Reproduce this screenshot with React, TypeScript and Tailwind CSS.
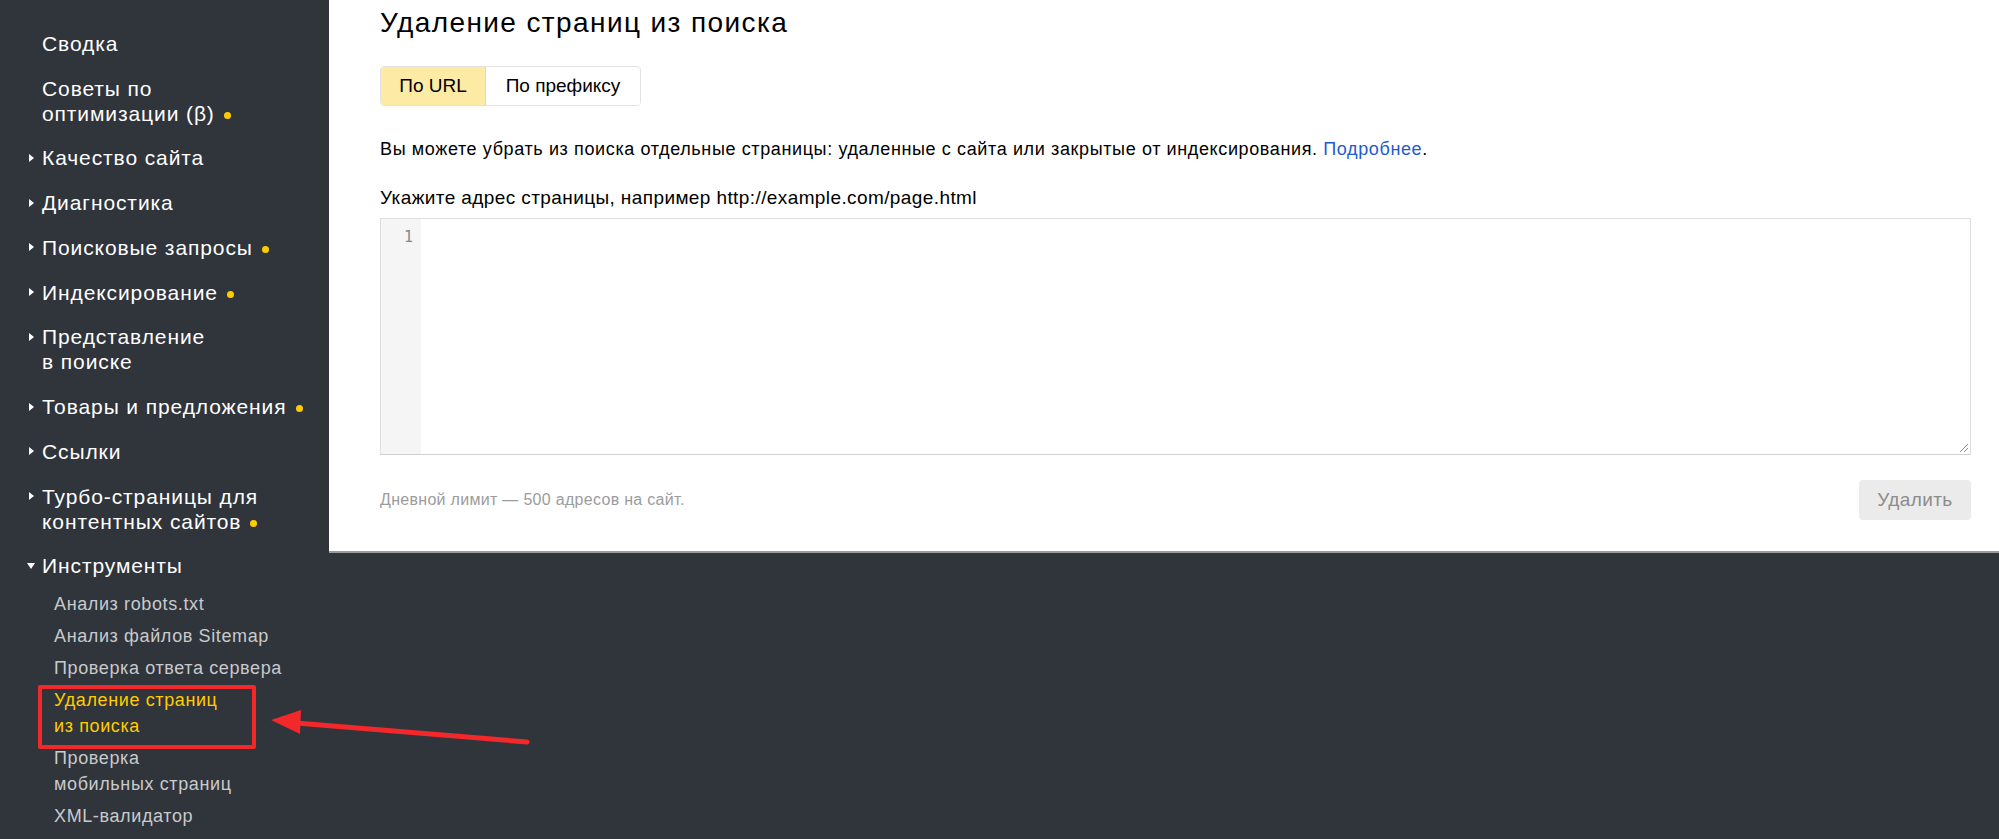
import type { ReactNode } from 'react';

const FONT = { fontFamily: '"Liberation Sans", Arial, sans-serif' };

type NavItem = {
  label: ReactNode;
  arrow?: 'right' | 'down';
  dot?: boolean;
};

const mainItems: NavItem[] = [
  { label: 'Сводка' },
  { label: <>Советы по<br />оптимизации (β)</>, dot: true },
  { label: 'Качество сайта', arrow: 'right' },
  { label: 'Диагностика', arrow: 'right' },
  { label: 'Поисковые запросы', arrow: 'right', dot: true },
  { label: 'Индексирование', arrow: 'right', dot: true },
  { label: <>Представление<br />в поиске</>, arrow: 'right' },
  { label: 'Товары и предложения', arrow: 'right', dot: true },
  { label: 'Ссылки', arrow: 'right' },
  { label: <>Турбо-страницы для<br />контентных сайтов</>, arrow: 'right', dot: true },
  { label: 'Инструменты', arrow: 'down' },
];

const toolItems: { label: ReactNode; active?: boolean }[] = [
  { label: 'Анализ robots.txt' },
  { label: 'Анализ файлов Sitemap' },
  { label: 'Проверка ответа сервера' },
  { label: <>Удаление страниц<br />из поиска</>, active: true },
  { label: <>Проверка<br />мобильных страниц</> },
  { label: 'XML-валидатор' },
];

function Dot() {
  return <span className="inline-block w-[7px] h-[7px] rounded-full bg-[#ffcc00] ml-[9px] align-middle" />;
}

function Sidebar() {
  return (
    <aside className="w-[329px] shrink-0 pt-[21px] text-white">
      {mainItems.map((item, i) => (
        <div key={i} className="flex items-start py-[9.88px] pl-[29px] text-[21px] leading-[25px] tracking-[0.9px]">
          <div className="w-[13px] h-[25px] flex items-center shrink-0">
            {item.arrow === 'right' && (
              <span className="w-0 h-0 border-y-[4px] border-y-transparent border-l-[5px] border-l-white" />
            )}
            {item.arrow === 'down' && (
              <span className="w-0 h-0 -ml-[2px] border-x-[4.5px] border-x-transparent border-t-[6px] border-t-white" />
            )}
          </div>
          <div>
            {item.label}
            {item.dot && <Dot />}
          </div>
        </div>
      ))}
      <div>
        {toolItems.map((item, i) => (
          <div
            key={i}
            className={
              item.active
                ? 'pl-[54px] py-[3px] text-[18px] leading-[26px] tracking-[0.62px] text-[#ffcc00]'
                : 'pl-[54px] py-[3px] text-[18px] leading-[26px] tracking-[0.62px] text-[#c9cacc]'
            }
          >
            {item.label}
          </div>
        ))}
      </div>
    </aside>
  );
}

function Content() {
  return (
    <main className="flex-1 self-start bg-white border-b-2 border-[#9a9b9d] pl-[51px] pr-[28px] pt-[6px] pb-[31px] text-black">
      <h1 className="text-[28px] leading-[34px] font-normal tracking-[1.4px]">Удаление страниц из поиска</h1>

      {/* Tabs */}
      <div className="mt-[26px] inline-flex h-[40px] border border-[#e2e2e2] rounded-[4px] overflow-hidden text-[19px]">
        <div className="w-[105px] flex items-center justify-center bg-[#fdeba5] border-r border-[#e6d9a4]">По URL</div>
        <div className="w-[154px] flex items-center justify-center bg-white">По префиксу</div>
      </div>

      <p className="mt-[31px] text-[18px] leading-[24px] tracking-[0.62px]">
        Вы можете убрать из поиска отдельные страницы: удаленные с сайта или закрытые от индексирования.{' '}
        <a className="text-[#1c5bd0]">Подробнее</a>.
      </p>

      <p className="mt-[25px] text-[19px] leading-[24px] tracking-[0.4px]">
        Укажите адрес страницы, например http://example.com/page.html
      </p>

      {/* Editor */}
      <div className="relative mt-[8px] h-[237px] flex border border-[#dedede] border-b-[#cfcfcf]">
        <div
          className="w-[40px] bg-[#f5f5f5] pt-[7px] pr-[8px] text-right text-[15px] leading-[22px] text-[#888]"
          style={{ fontFamily: '"DejaVu Sans Mono", monospace' }}
        >
          1
        </div>
        <div className="flex-1" />
        <svg className="absolute right-[1px] bottom-[1px]" width="11" height="11" viewBox="0 0 11 11">
          <path d="M10 2 L2 10 M10 6 L6 10" stroke="#8a8a8a" strokeWidth="1" fill="none" />
        </svg>
      </div>

      <div className="mt-[25px] flex items-center justify-between">
        <span className="text-[16px] tracking-[0.3px] text-[#9c9c9c]">Дневной лимит — 500 адресов на сайт.</span>
        <button className="w-[112px] h-[40px] rounded-[4px] bg-[#ebebeb] text-[19px] tracking-[0.4px] text-[#8c8c8c]">
          Удалить
        </button>
      </div>
    </main>
  );
}

export default function App() {
  return (
    <div className="relative flex w-[1999px] h-[839px] overflow-hidden bg-[#30343b]" style={FONT}>
      <Sidebar />
      <Content />

      {/* Annotation: red box and arrow */}
      <div className="absolute left-[38px] top-[685px] w-[218px] h-[64px] border-[4px] border-[#f2282b] rounded-[2px]" />
      <svg className="absolute left-0 top-0 pointer-events-none" width="1999" height="839">
        <line x1="527" y1="742" x2="296" y2="723" stroke="#f2282b" strokeWidth="5" strokeLinecap="round" />
        <polygon points="271,720 301,710 300,734" fill="#f2282b" />
      </svg>
    </div>
  );
}
